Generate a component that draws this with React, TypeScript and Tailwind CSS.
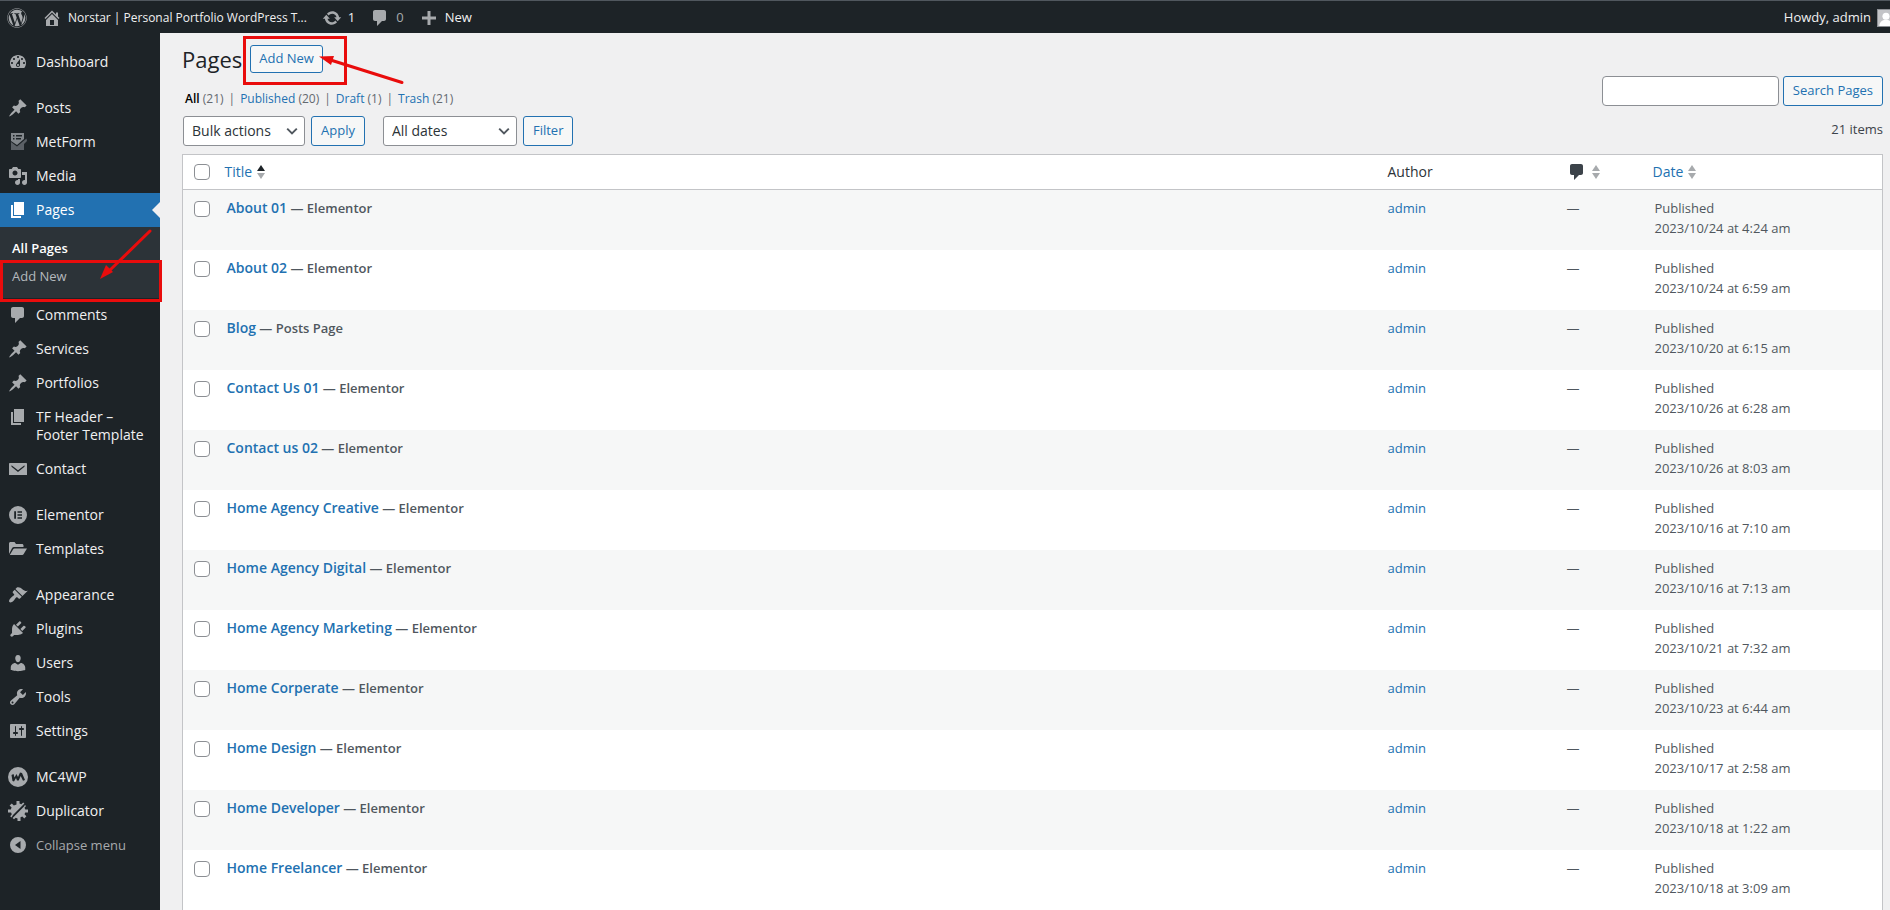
import React from 'react';
import { FaWordpress } from 'react-icons/fa';

const ICONS = {
  home: 'M16 8.5l1.53 1.53-1.06 1.06L10 4.6l-6.47 6.49-1.06-1.06L10 2.5l4 4v-2h2v4zm-6-2.46l6 5.99V18H4v-5.97zM12 17v-5H8v5h4z',
  update: 'M10.2 3.28c3.53 0 6.43 2.61 6.92 6h2.08l-3.5 4-3.5-4h2.32c-.45-1.97-2.21-3.45-4.32-3.45-1.45 0-2.73.71-3.54 1.78L4.95 5.66C6.23 4.2 8.11 3.28 10.2 3.28zm-.4 13.44c-3.52 0-6.43-2.61-6.92-6H.8l3.5-4c1.17 1.33 2.33 2.67 3.5 4H5.48c.45 1.97 2.21 3.45 4.32 3.45 1.45 0 2.73-.71 3.54-1.78l1.71 1.95c-1.28 1.46-3.15 2.38-5.25 2.38z',
  plus: 'M8.5 3h3v5.5H17v3h-5.5V17h-3v-5.5H3v-3h5.5z',
  dashboard: 'M3.76 16h12.48c1.1-1.37 1.76-3.11 1.76-5 0-4.42-3.58-8-8-8s-8 3.58-8 8c0 1.89.66 3.63 1.76 5zM10 4c.55 0 1 .45 1 1s-.45 1-1 1-1-.45-1-1 .45-1 1-1zM6 6c.55 0 1 .45 1 1s-.45 1-1 1-1-.45-1-1 .45-1 1-1zm8 0c.55 0 1 .45 1 1s-.45 1-1 1-1-.45-1-1 .45-1 1-1zm-5.37 5.55L12 7v6c0 1.1-.9 2-2 2s-2-.9-2-2c0-.57.24-1.08.63-1.45zM4 10c.55 0 1 .45 1 1s-.45 1-1 1-1-.45-1-1 .45-1 1-1zm12 0c.55 0 1 .45 1 1s-.45 1-1 1-1-.45-1-1 .45-1 1-1zm-5 3c0-.55-.45-1-1-1s-1 .45-1 1 .45 1 1 1 1-.45 1-1z',
  pin: 'M10.44 3.02l1.82-1.82 6.36 6.35-1.83 1.82c-1.05-.68-2.48-.57-3.41.36l-.75.75c-.92.93-1.04 2.35-.35 3.41l-1.83 1.82-2.41-2.41-2.8 2.79c-.42.42-3.38 2.71-3.8 2.29s1.86-3.39 2.28-3.81l2.79-2.79L4.1 9.36l1.83-1.82c1.05.69 2.48.57 3.4-.36l.75-.75c.93-.92 1.05-2.35.36-3.41z',
  form: 'M3 10l6 4.500L18.500 6.500 19 9l-3 3v6H3z',
  media: 'M13 11V4c0-.55-.45-1-1-1h-1.67L9 1H5L3.67 3H2c-.55 0-1 .45-1 1v7c0 .55.45 1 1 1h10c.55 0 1-.45 1-1zM7 4.5c1.38 0 2.5 1.12 2.5 2.5S8.38 9.5 7 9.5 4.5 8.38 4.5 7 5.62 4.5 7 4.5zM14 6h5v10.5c0 1.38-1.12 2.5-2.5 2.5S14 17.88 14 16.5s1.12-2.5 2.5-2.5c.17 0 .34.02.5.05V9h-3V6zm-4 8.05V13h2v3.5c0 1.38-1.12 2.5-2.5 2.5S7 17.88 7 16.5 8.12 14 9.5 14c.17 0 .34.02.5.05z',
  page: 'M6 15V2h10v13H6zm-1 1h8v2H3V5h2v11z',
  comment: 'M5 2h9c1.1 0 2 .9 2 2v7c0 1.1-.9 2-2 2h-2l-5 5v-5H5c-1.1 0-2-.9-2-2V4c0-1.1.9-2 2-2z',
  email: 'M2 4h16c.55 0 1 .45 1 1v11H1V5c0-.55.45-1 1-1zM3.500 6.200v1.600L10 13l6.500-5.200V6.200L10 11.200z',
  elementor: 'M10 1a9 9 0 1 0 0 18 9 9 0 0 0 0-18zM6.200 6.300h1.800v7.400H6.200zM9.500 6.300h4.500v1.500H9.500zM9.500 9.250h4.500v1.500H9.500zM9.500 12.200h4.500v1.500H9.500z',
  folder: 'M1 15V4.500C1 3.700 1.700 3 2.500 3h4L8 5h6c.8 0 1.500.7 1.500 1.500V8H6c-.8 0-1.500.4-2 1.200zM6.500 9.500H19l-3.300 5.600c-.3.600-.9.900-1.500.9H1.800l3.400-5.800c.3-.4.800-.7 1.300-.7z',
  appearance: 'M14.48 11.06L7.41 3.99l1.5-1.5c.5-.56 2.3-.47 3.51.32 1.21.8 1.43 1.28 2.91 2.1 1.18.64 2.45 1.26 4.45.85zm-.71.71L6.7 4.7 4.93 6.47c-.39.39-.39 1.02 0 1.41l1.06 1.06c.39.39.39 1.03 0 1.42-.6.6-1.43 1.11-2.21 1.69-.35.26-.7.53-1.01.84C1.43 14.23.4 16.08 1.4 17.07c.99 1 2.84-.03 4.18-1.36.31-.31.58-.66.85-1.02.57-.78 1.08-1.61 1.69-2.21.39-.39 1.02-.39 1.41 0l1.06 1.06c.39.39 1.02.39 1.41 0z',
  plugins: 'M13.11 4.36L9.87 7.6 8 5.73l3.24-3.24c.35-.34 1.05-.2 1.56.32.52.51.66 1.21.31 1.55zm-8 1.77l.91-1.12 9.01 9.01-1.19.84c-.71.71-2.63 1.16-3.82 1.16H6.14L4.9 17.26c-.59.59-1.54.59-2.12 0-.59-.58-.59-1.53 0-2.12l1.24-1.24v-3.88c0-1.13.4-3.19 1.09-3.89zm7.26 3.97l3.24-3.24c.34-.35 1.04-.21 1.55.31.52.51.66 1.21.31 1.55l-3.24 3.25z',
  users: 'M10 9.25c-2.27 0-2.73-3.44-2.73-3.44C7 4.02 7.82 2 9.97 2c2.16 0 2.98 2.02 2.71 3.81 0 0-.41 3.44-2.68 3.44zm0 2.57L12.72 10c2.39 0 4.52 2.33 4.52 4.53v2.49s-3.65 1.13-7.24 1.13c-3.65 0-7.24-1.13-7.24-1.13v-2.49c0-2.25 1.94-4.48 4.47-4.48z',
  tools: 'M16.68 9.77c-1.34 1.34-3.3 1.67-4.95.99l-5.41 6.52c-.99.99-2.59.99-3.58 0s-.99-2.59 0-3.57l6.52-5.42c-.68-1.65-.35-3.61.99-4.95 1.28-1.28 3.12-1.62 4.72-1.06l-2.89 2.89 2.82 2.82 2.86-2.87c.53 1.58.18 3.39-1.08 4.65zM3.81 16.21c.4.39 1.04.39 1.43 0 .4-.4.4-1.04 0-1.43-.39-.4-1.03-.4-1.43 0-.39.39-.39 1.03 0 1.43z',
  settings: 'M18 16V4c0-.55-.45-1-1-1H3c-.55 0-1 .45-1 1v12c0 .55.45 1 1 1h14c.55 0 1-.45 1-1zM8 11h1c.55 0 1 .45 1 1s-.45 1-1 1H8v1.5c0 .28-.22.5-.5.5s-.5-.22-.5-.5V13H6c-.55 0-1-.45-1-1s.45-1 1-1h1V5.5c0-.28.22-.5.5-.5s.5.22.5.5V11zm5-2h-1c-.55 0-1-.45-1-1s.45-1 1-1h1V5.5c0-.28.22-.5.5-.5s.5.22.5.5V7h1c.55 0 1 .45 1 1s-.45 1-1 1h-1v5.5c0 .28-.22.5-.5.5s-.5-.22-.5-.5V9z',
  mc4wp: 'M10 0a10 10 0 1 0 0 20 10 10 0 0 0 0-20zM3.500 8l2 -1 1 3.500 2-3.500 1.500 3L12 5.500l2 .5 3 7-2 .8-2.300-4.800-2 4.500H9L8 11l-2 3.500-1.500-.5z',
  duplicator: 'M8.500 0h3v2.600l1.800.7 1.900-1.900 1.200 1.200L5 14l-1.500 2.500-1.300-1.200 1.600-2-.8-1.800H0v-3h2.800l.8-1.900-2-2 2.200-2.100 2 2 2.700-1zM18 5l-1.500 1.800.8 1.700H20v3h-2.800l-.7 1.800 1.900 2-2.100 2.100-2-2-1.800.8V20h-3v-2.600l-1.800-.7L6 18.300 4.600 17 16 5.500l1-1.500z',
  collapse: 'M10 2a8 8 0 1 0 0 16 8 8 0 0 0 0-16zM12.500 6v8L7 10z',
};

type IconName = keyof typeof ICONS;

type MenuItem = { label: string; icon: IconName; gap?: boolean; current?: boolean };

const MENU: MenuItem[] = [
  { label: 'Dashboard', icon: 'dashboard' },
  { label: 'Posts', icon: 'pin', gap: true },
  { label: 'MetForm', icon: 'form' },
  { label: 'Media', icon: 'media' },
  { label: 'Pages', icon: 'page', current: true },
  { label: 'Comments', icon: 'comment' },
  { label: 'Services', icon: 'pin' },
  { label: 'Portfolios', icon: 'pin' },
  { label: 'TF Header – Footer Template', icon: 'page' },
  { label: 'Contact', icon: 'email' },
  { label: 'Elementor', icon: 'elementor', gap: true },
  { label: 'Templates', icon: 'folder' },
  { label: 'Appearance', icon: 'appearance', gap: true },
  { label: 'Plugins', icon: 'plugins' },
  { label: 'Users', icon: 'users' },
  { label: 'Tools', icon: 'tools' },
  { label: 'Settings', icon: 'settings' },
  { label: 'MC4WP', icon: 'mc4wp', gap: true },
  { label: 'Duplicator', icon: 'duplicator' },
];

const PAGES = [
  { title: 'About 01', state: 'Elementor', date: '2023/10/24 at 4:24 am' },
  { title: 'About 02', state: 'Elementor', date: '2023/10/24 at 6:59 am' },
  { title: 'Blog', state: 'Posts Page', date: '2023/10/20 at 6:15 am' },
  { title: 'Contact Us 01', state: 'Elementor', date: '2023/10/26 at 6:28 am' },
  { title: 'Contact us 02', state: 'Elementor', date: '2023/10/26 at 8:03 am' },
  { title: 'Home Agency Creative', state: 'Elementor', date: '2023/10/16 at 7:10 am' },
  { title: 'Home Agency Digital', state: 'Elementor', date: '2023/10/16 at 7:13 am' },
  { title: 'Home Agency Marketing', state: 'Elementor', date: '2023/10/21 at 7:32 am' },
  { title: 'Home Corperate', state: 'Elementor', date: '2023/10/23 at 6:44 am' },
  { title: 'Home Design', state: 'Elementor', date: '2023/10/17 at 2:58 am' },
  { title: 'Home Developer', state: 'Elementor', date: '2023/10/18 at 1:22 am' },
  { title: 'Home Freelancer', state: 'Elementor', date: '2023/10/18 at 3:09 am' },
];

const VIEWS = [
  { label: 'Published', count: 20 },
  { label: 'Draft', count: 1 },
  { label: 'Trash', count: 21 },
];

const Icon = ({ name, className = '' }: { name: IconName; className?: string }) => (
  <svg viewBox="0 0 20 20" fill="currentColor" fillRule="evenodd" aria-hidden="true" className={`shrink-0 w-5 h-5 ${className}`}>
    {name === 'form' && <path d="M3 1h13v6l-7 6-6-4zM5 3v1.500h1.500V3zm3 0v1.500h6V3zM5 6v1.500h1.500V6zm3 0v1.500h5V6z" fill="#82878c" />}
    <path d={ICONS[name]} />
  </svg>
);

const SortArrows = ({ asc }: { asc?: boolean }) => (
  <svg viewBox="0 0 8 16" aria-hidden="true" className="w-2 h-4 shrink-0">
    <path d="M4 1l4 6H0z" fill={asc ? '#1d2327' : '#a7aaad'} />
    <path d="M4 15l4-6H0z" fill="#a7aaad" />
  </svg>
);

const Checkbox = ({ label }: { label: string }) => (
  <input type="checkbox" aria-label={label} className="block appearance-none w-4 h-4 bg-white border border-[#8c8f94] rounded" />
);

const Select = ({ label, className }: { label: string; className: string }) => (
  <div className={`relative ${className}`}>
    <select aria-label={label} className="appearance-none w-full h-[30px] pl-2 pr-6 bg-white border border-[#8c8f94] rounded-[3px] text-[#2c3338] text-sm">
      <option>{label}</option>
    </select>
    <svg viewBox="0 0 20 20" aria-hidden="true" className="absolute right-[5px] top-[7px] w-4 h-4 pointer-events-none">
      <path d="M4 7l6 6 6-6" fill="none" stroke="#50575e" strokeWidth="2.4" />
    </svg>
  </div>
);

const Button = ({ children }: { children: React.ReactNode }) => (
  <button type="button" className="h-[30px] px-[9px] bg-[#f6f7f7] border border-[#2271b1] rounded-[3px] text-[#2271b1] text-[13px]">{children}</button>
);

const AdminBar = () => (
  <header className="relative z-10 flex items-center justify-between h-[33px] pt-px border-t border-[#50575e] bg-[#1d2327] text-[#f0f0f1] text-[13px]">
    <div className="flex items-center pl-[7px]">
      <a href="#wp" aria-label="About WordPress"><FaWordpress className="w-5 h-5 text-[#a7aaad]" /></a>
      <a href="#site" className="flex items-center gap-[6px] ml-[15px] text-xs">
        <Icon name="home" className="text-[#a7aaad]" />Norstar | Personal Portfolio WordPress T...
      </a>
      <a href="#updates" className="flex items-center gap-[6px] ml-[15px]">
        <Icon name="update" className="text-[#a7aaad]" />1
      </a>
      <a href="#comments" className="flex items-center gap-[6px] ml-[15px] text-[#a7aaad]">
        <Icon name="comment" />0
      </a>
      <a href="#new" className="flex items-center gap-[6px] ml-[15px]">
        <Icon name="plus" className="text-[#a7aaad]" />New
      </a>
    </div>
    <a href="#profile" className="flex items-center gap-[6px] -mr-[5px]">
      Howdy, admin
      <svg viewBox="0 0 18 18" aria-hidden="true" className="w-[18px] h-[18px] border border-[#8c8f94]">
        <path d="M0 0h18v18H0z" fill="#c3c4c7" />
        <circle cx="9" cy="7" r="4" fill="#fff" />
        <path d="M1.500 18c0-4 3-7 7.500-7s7.500 3 7.500 7z" fill="#fff" />
      </svg>
    </a>
  </header>
);

const Sidebar = () => (
  <nav className="relative w-40 shrink-0 pt-3 bg-[#1d2327] text-[#f0f0f1] text-sm leading-[18px]">
    <ul>
      {MENU.map(item => (
        <li key={item.label} className={item.gap ? 'mt-3' : ''}>
          <a href="#menu" className={`relative flex gap-2 py-2 px-2 ${item.current ? 'bg-[#2271b1] text-white' : ''}`}>
            <Icon name={item.icon} className={`-my-px ${item.current ? 'text-white' : item.icon === 'form' ? 'text-[#5b6066]' : 'text-[#a7aaad]'}`} />
            <span className="flex-1">{item.label}</span>
            {item.current && <span className="absolute right-0 top-[9px] border-8 border-transparent border-r-[#f0f0f1]" />}
          </a>
          {item.current && (
            <div className="relative pt-[7px] pb-2 bg-[#2c3338] text-[13px]">
              <a href="#all" className="flex items-center h-7 pl-3 font-semibold text-white">All Pages</a>
              <a href="#new" className="flex items-center h-7 pl-3 text-[#b4b9be]">Add New</a>
              {/* Marker around the submenu entry */}
              <div className="absolute z-20 left-0 top-[33px] w-[162px] h-[42px] border-[3px] border-[#e90c0c] pointer-events-none" />
              <svg viewBox="0 0 52 52" aria-hidden="true" className="absolute z-20 left-[100px] top-[2px] w-[52px] h-[52px] pointer-events-none">
                <path d="M50 2L8 43" stroke="#e90c0c" strokeWidth="3" strokeLinecap="round" />
                <path d="M0 50l6-14 7 7z" fill="#e90c0c" />
              </svg>
            </div>
          )}
        </li>
      ))}
    </ul>
    <button type="button" className="flex gap-2 w-full py-2 pl-2 text-left text-[13px] text-[#a7aaad]">
      <Icon name="collapse" className="-my-px" />Collapse menu
    </button>
  </nav>
);

const App: React.FC = () => {
  return (
    <div className="h-screen flex flex-col overflow-hidden bg-[#f0f0f1] text-[#3c434a] font-['Open_Sans',sans-serif] text-[13px]">
      <AdminBar />
      <div className="flex flex-1">
        <Sidebar />
        <main className="flex-1 min-w-0 pl-[22px] pr-[7px]">
          <div className="relative flex items-center gap-2 pt-3">
            <h1 className="text-[22px] leading-[28px] text-[#1d2327]">Pages</h1>
            <a href="#new" className="flex items-center h-7 px-2 bg-[#f6f7f7] border border-[#2271b1] rounded-[3px] font-medium text-[#2271b1]">Add New</a>
            {/* Marker around the button */}
            <div className="absolute left-[61px] top-[3px] w-[104px] h-[49px] border-[3px] border-[#e90c0c] pointer-events-none" />
            <svg viewBox="0 0 86 30" aria-hidden="true" className="absolute left-[137px] top-[22px] w-[86px] h-[30px] pointer-events-none">
              <path d="M10 4.500l73 23" stroke="#e90c0c" strokeWidth="3" strokeLinecap="round" />
              <path d="M0 1.500l15-.5-3 9z" fill="#e90c0c" />
            </svg>
          </div>

          <div className="flex justify-between">
            <div>
              <ul className="flex mt-[17px] pl-[3px] text-xs leading-[18px] text-[#646970]">
                <li><a href="#all" className="font-semibold text-black">All</a> (21)</li>
                {VIEWS.map(view => (
                  <li key={view.label}>
                    <span className="mx-[5px]">|</span>
                    <a href="#view" className="text-[#2271b1]">{view.label}</a> ({view.count})
                  </li>
                ))}
              </ul>
              <div className="flex mt-2 pl-px gap-[6px]">
                <Select label="Bulk actions" className="w-[122px]" />
                <Button>Apply</Button>
                <Select label="All dates" className="w-[134px] ml-3" />
                <Button>Filter</Button>
              </div>
            </div>
            <div className="flex flex-col items-end">
              <form className="flex gap-1 mt-[3px]">
                <input type="search" aria-label="Search Pages" className="w-[177px] h-[30px] px-2 bg-white border border-[#8c8f94] rounded" />
                <Button>Search Pages</Button>
              </form>
              <span className="mt-[14px]">21 items</span>
            </div>
          </div>

          <table className="w-full mt-2 table-fixed border border-b-0 border-[#c3c4c7] bg-white text-left">
            <thead className="text-sm text-[#2c3338]">
              <tr className="h-[35px] border-b border-[#c3c4c7]">
                <th className="w-[34px] pl-[11px]"><Checkbox label="Select All" /></th>
                <th className="pl-2 font-normal">
                  <a href="#title" className="flex items-center gap-[5px] text-[#2271b1]">Title <SortArrows asc /></a>
                </th>
                <th className="w-[182px] pl-[11px] font-normal">Author</th>
                <th className="w-[86px] pl-2">
                  <a href="#comments" aria-label="Comments" className="flex items-center gap-[5px] text-[#3c434a]">
                    <Icon name="comment" /><SortArrows />
                  </a>
                </th>
                <th className="w-[14%] pl-2 font-normal">
                  <a href="#date" className="flex items-center gap-[5px] text-[#2271b1]">Date <SortArrows /></a>
                </th>
              </tr>
            </thead>
            <tbody className="text-[#50575e] leading-5">
              {PAGES.map(page => (
                <tr key={page.title} className="h-[60px] align-top odd:bg-[#f6f7f7]">
                  <td className="pt-[11px] pl-[11px]"><Checkbox label={`Select ${page.title}`} /></td>
                  <td className="pt-2 pl-[10px] font-semibold">
                    <a href="#edit" className="text-sm leading-5 text-[#2271b1]">{page.title}</a> — {page.state}
                  </td>
                  <td className="pt-2 pl-[11px]"><a href="#author" className="text-[#2271b1]">admin</a></td>
                  <td className="pt-2 pl-2">—</td>
                  <td className="pt-2 pl-[10px]">Published<br />{page.date}</td>
                </tr>
              ))}
            </tbody>
          </table>
        </main>
      </div>
    </div>
  );
};

export default App;
